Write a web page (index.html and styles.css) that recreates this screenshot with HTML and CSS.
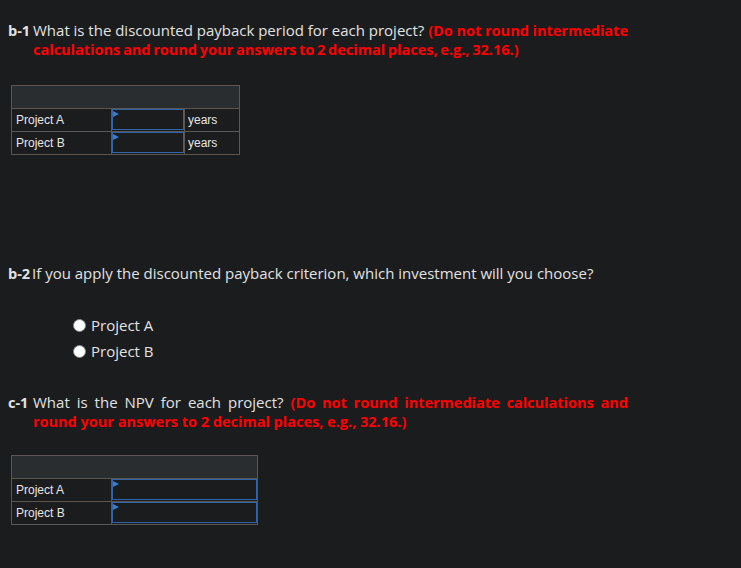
FILE: index.html
```html
<!DOCTYPE html>
<html>
<head>
<meta charset="utf-8">
<link rel="stylesheet" href="styles.css">
</head>
<body>
<div class="q q-b1">
  <div class="label">b-1</div>
  <div class="text">What is the discounted payback period for each project? <span class="red">(Do not round intermediate calculations and round your answers to 2 decimal places, e.g., 32.16.)</span></div>
</div>
<table class="grid g1">
  <tr class="head"><td colspan="3"></td></tr>
  <tr><td class="name">Project A</td><td class="inp"><div class="box"></div></td><td class="unit">years</td></tr>
  <tr><td class="name">Project B</td><td class="inp"><div class="box"></div></td><td class="unit">years</td></tr>
</table>
<div class="q q-b2">
  <div class="label tight">b-2</div>
  <div class="text">If you apply the discounted payback criterion, which investment will you choose?</div>
</div>
<div class="radios">
  <div class="radio"><span class="dot"></span>Project A</div>
  <div class="radio"><span class="dot"></span>Project B</div>
</div>
<div class="q q-c1">
  <div class="label">c-1</div>
  <div class="text">What is the NPV for each project? <span class="red">(Do not round intermediate calculations and round your answers to 2 decimal places, e.g., 32.16.)</span></div>
</div>
<table class="grid g2">
  <tr class="head"><td colspan="2"></td></tr>
  <tr><td class="name">Project A</td><td class="inp wide"><div class="box"></div></td></tr>
  <tr><td class="name">Project B</td><td class="inp wide"><div class="box"></div></td></tr>
</table>
</body>
</html>
```
FILE: styles.css
```css
html, body {
  margin: 0;
  padding: 0;
  background: #1b1c1e;
}
body {
  padding: 21px 0 0 8px;
  font-family: "Open Sans", Lato, sans-serif;
  font-size: 15px;
  color: #e2e2e2;
}
.q {
  display: flex;
  line-height: 19px;
  width: 620px;
}
.label {
  font-weight: bold;
  font-size: 14.5px;
  width: 25px;
  flex: none;
}
.label.tight {
  width: 24px;
}
.text {
  flex: 1;
  text-align: justify;
}
.q-b1 .text {
  word-spacing: -1px;
}
.red {
  color: #ff0000;
  font-weight: bold;
  font-size: 14.5px;
}
.grid {
  border-collapse: collapse;
  margin: 26px 0 0 3px;
  font-family: "Liberation Sans", Arial, sans-serif;
  font-size: 12px;
  color: #e6e6e6;
}
.grid td {
  border: 1px solid #5b5750;
  padding: 0;
  height: 22px;
}
.grid .head td {
  background: #2a2d30;
}
.grid .name {
  width: 95px;
  padding-left: 4px;
}
.grid .inp {
  width: 72px;
  padding: 0;
  vertical-align: top;
}
.grid .inp.wide {
  width: 145px;
}
.grid .unit {
  width: 51px;
  padding-left: 3px;
}
.box {
  position: relative;
  height: 19px;
  border: 1.5px solid #2f64ad;
  margin: 0;
}
.box::before {
  content: "";
  position: absolute;
  left: 0;
  top: 1px;
  border-left: 6px solid #3a7bd0;
  border-top: 3.5px solid transparent;
  border-bottom: 3.5px solid transparent;
}
.q-b2 {
  margin-top: 109px;
}
.radios {
  margin: 29px 0 0 65px;
  line-height: 26px;
}
.radio {
  display: flex;
  align-items: center;
}
.dot {
  width: 11px;
  height: 11px;
  border-radius: 50%;
  background: #fff;
  border: 1px solid #888;
  margin-right: 5px;
}
.q-c1 {
  margin-top: 29px;
}
.g2 {
  margin-top: 24px;
}
```
